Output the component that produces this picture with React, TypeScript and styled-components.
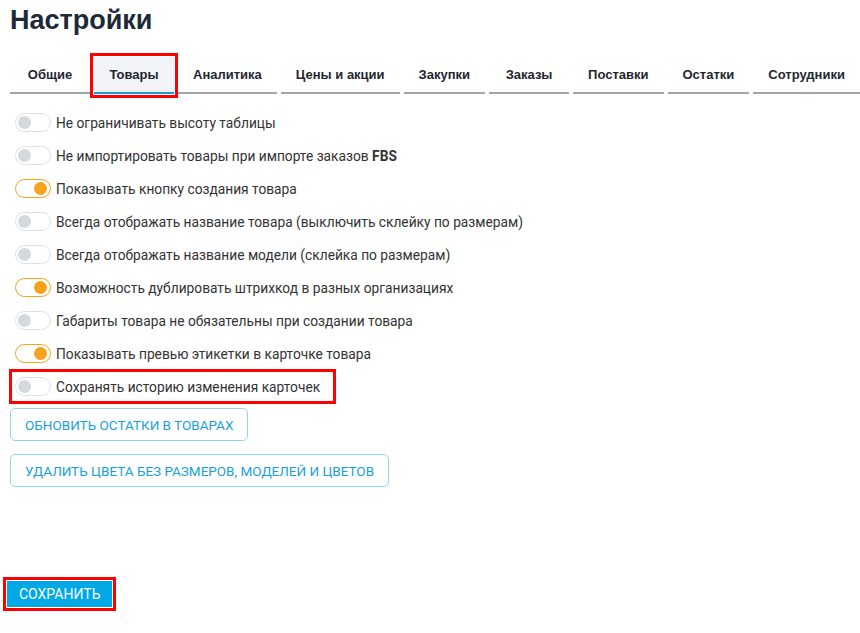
import { useState } from 'react';
import styled, { createGlobalStyle } from 'styled-components';

interface Setting {
  id: number;
  label: React.ReactNode;
  on: boolean;
  marked?: boolean;
}

const tabs = [
  'Общие',
  'Товары',
  'Аналитика',
  'Цены и акции',
  'Закупки',
  'Заказы',
  'Поставки',
  'Остатки',
  'Сотрудники',
];

const initialSettings: Setting[] = [
  { id: 1, label: 'Не ограничивать высоту таблицы', on: false },
  {
    id: 2,
    label: (
      <>
        Не импортировать товары при импорте заказов <b>FBS</b>
      </>
    ),
    on: false,
  },
  { id: 3, label: 'Показывать кнопку создания товара', on: true },
  {
    id: 4,
    label: 'Всегда отображать название товара (выключить склейку по размерам)',
    on: false,
  },
  {
    id: 5,
    label: 'Всегда отображать название модели (склейка по размерам)',
    on: false,
  },
  {
    id: 6,
    label: 'Возможность дублировать штрихкод в разных организациях',
    on: true,
  },
  {
    id: 7,
    label: 'Габариты товара не обязательны при создании товара',
    on: false,
  },
  { id: 8, label: 'Показывать превью этикетки в карточке товара', on: true },
  {
    id: 9,
    label: 'Сохранять историю изменения карточек',
    on: false,
    marked: true,
  },
];

const App = () => {
  const [activeTab, setActiveTab] = useState<string>('Товары');
  const [settings, setSettings] = useState<Setting[]>(initialSettings);

  function handleToggle(id: number) {
    setSettings(
      settings.map((s) => (s.id === id ? { ...s, on: !s.on } : s))
    );
  }

  return (
    <>
      <GlobalStyle />
      <StyledPage>
        <StyledTitle>Настройки</StyledTitle>

        <StyledTabs>
          {tabs.map((tab) => (
            <StyledTab
              key={tab}
              type="button"
              $active={tab === activeTab}
              onClick={() => setActiveTab(tab)}
            >
              {tab}
            </StyledTab>
          ))}
        </StyledTabs>

        <StyledList>
          {settings.map((s) => (
            <StyledRow key={s.id} $marked={s.marked}>
              <StyledSwitch
                type="button"
                $on={s.on}
                onClick={() => handleToggle(s.id)}
              >
                <span />
              </StyledSwitch>
              <span>{s.label}</span>
            </StyledRow>
          ))}
        </StyledList>

        <StyledActions>
          <StyledOutlineButton type="button">
            Обновить остатки в товарах
          </StyledOutlineButton>
          <StyledOutlineButton type="button">
            Удалить цвета без размеров, моделей и цветов
          </StyledOutlineButton>
        </StyledActions>

        <StyledFooter>
          <StyledSaveButton type="button">Сохранить</StyledSaveButton>
        </StyledFooter>
      </StyledPage>
    </>
  );
};

const GlobalStyle = createGlobalStyle`
  body {
    margin: 0;
    background: #fff;
    font-family: Roboto, 'Liberation Sans', sans-serif;
    color: #333;
  }
`;

const StyledPage = styled.div`
  padding: 0 3px 20px 10px;
`;

const StyledTitle = styled.h1`
  margin: 0;
  padding-top: 5px;
  font-family: 'Liberation Sans', Arial, sans-serif;
  font-size: 27px;
  line-height: 30px;
  font-weight: 700;
  color: #1c2a38;
`;

const StyledTabs = styled.div`
  display: flex;
  gap: 4px;
  margin-top: 22px;
`;

const StyledTab = styled.button<{ $active?: boolean }>`
  flex: 0 0 auto;
  min-width: 80px;
  height: 37px;
  padding: 0 15px;
  border: none;
  border-bottom: 2px solid ${(p) => (p.$active ? '#1a9ad6' : '#a2a6ab')};
  background: ${(p) => (p.$active ? '#f2f4f8' : 'transparent')};
  outline: ${(p) => (p.$active ? '3px solid #f00' : 'none')};
  outline-offset: 1px;
  font-family: 'Liberation Sans', Arial, sans-serif;
  font-size: 13px;
  font-weight: 700;
  color: #1f2730;
  cursor: pointer;
`;

const StyledList = styled.div`
  margin-top: 12px;
  display: flex;
  flex-direction: column;
`;

const StyledRow = styled.label<{ $marked?: boolean }>`
  display: flex;
  align-items: center;
  gap: 5px;
  height: 33px;
  padding: 0 15px 0 5px;
  width: ${(p) => (p.$marked ? 'fit-content' : 'auto')};
  outline: ${(p) => (p.$marked ? '3px solid #f00' : 'none')};
  outline-offset: -2px;
  font-size: 13.75px;
  color: #333;

  b {
    font-weight: 700;
  }
`;

const StyledSwitch = styled.button<{ $on?: boolean }>`
  position: relative;
  flex: none;
  width: 36px;
  height: 19px;
  padding: 0;
  border: 1px solid ${(p) => (p.$on ? '#f5a31f' : '#dde1e5')};
  border-radius: 10px;
  background: #fff;
  cursor: pointer;

  span {
    position: absolute;
    top: 2px;
    left: ${(p) => (p.$on ? '18px' : '2px')};
    width: 13px;
    height: 13px;
    border-radius: 50%;
    background: ${(p) => (p.$on ? '#f7a21b' : '#d5d9dd')};
  }
`;

const StyledActions = styled.div`
  display: flex;
  flex-direction: column;
  align-items: flex-start;
  gap: 13px;
  margin-top: 5px;
`;

const StyledOutlineButton = styled.button`
  height: 33px;
  padding: 0 14px;
  border: 1px solid #93d3f2;
  border-radius: 5px;
  background: #fff;
  font-family: Roboto, sans-serif;
  font-size: 13.5px;
  text-transform: uppercase;
  color: #1a9fdc;
  cursor: pointer;
`;

const StyledFooter = styled.div`
  margin-top: 94px;
  margin-left: -3px;
`;

const StyledSaveButton = styled.button`
  height: 26px;
  padding: 0 12px;
  border: none;
  background: #00a8e6;
  outline: 3px solid #f00;
  outline-offset: 1px;
  font-family: Roboto, sans-serif;
  font-size: 14px;
  text-transform: uppercase;
  color: #fff;
  cursor: pointer;
`;

export default App;
